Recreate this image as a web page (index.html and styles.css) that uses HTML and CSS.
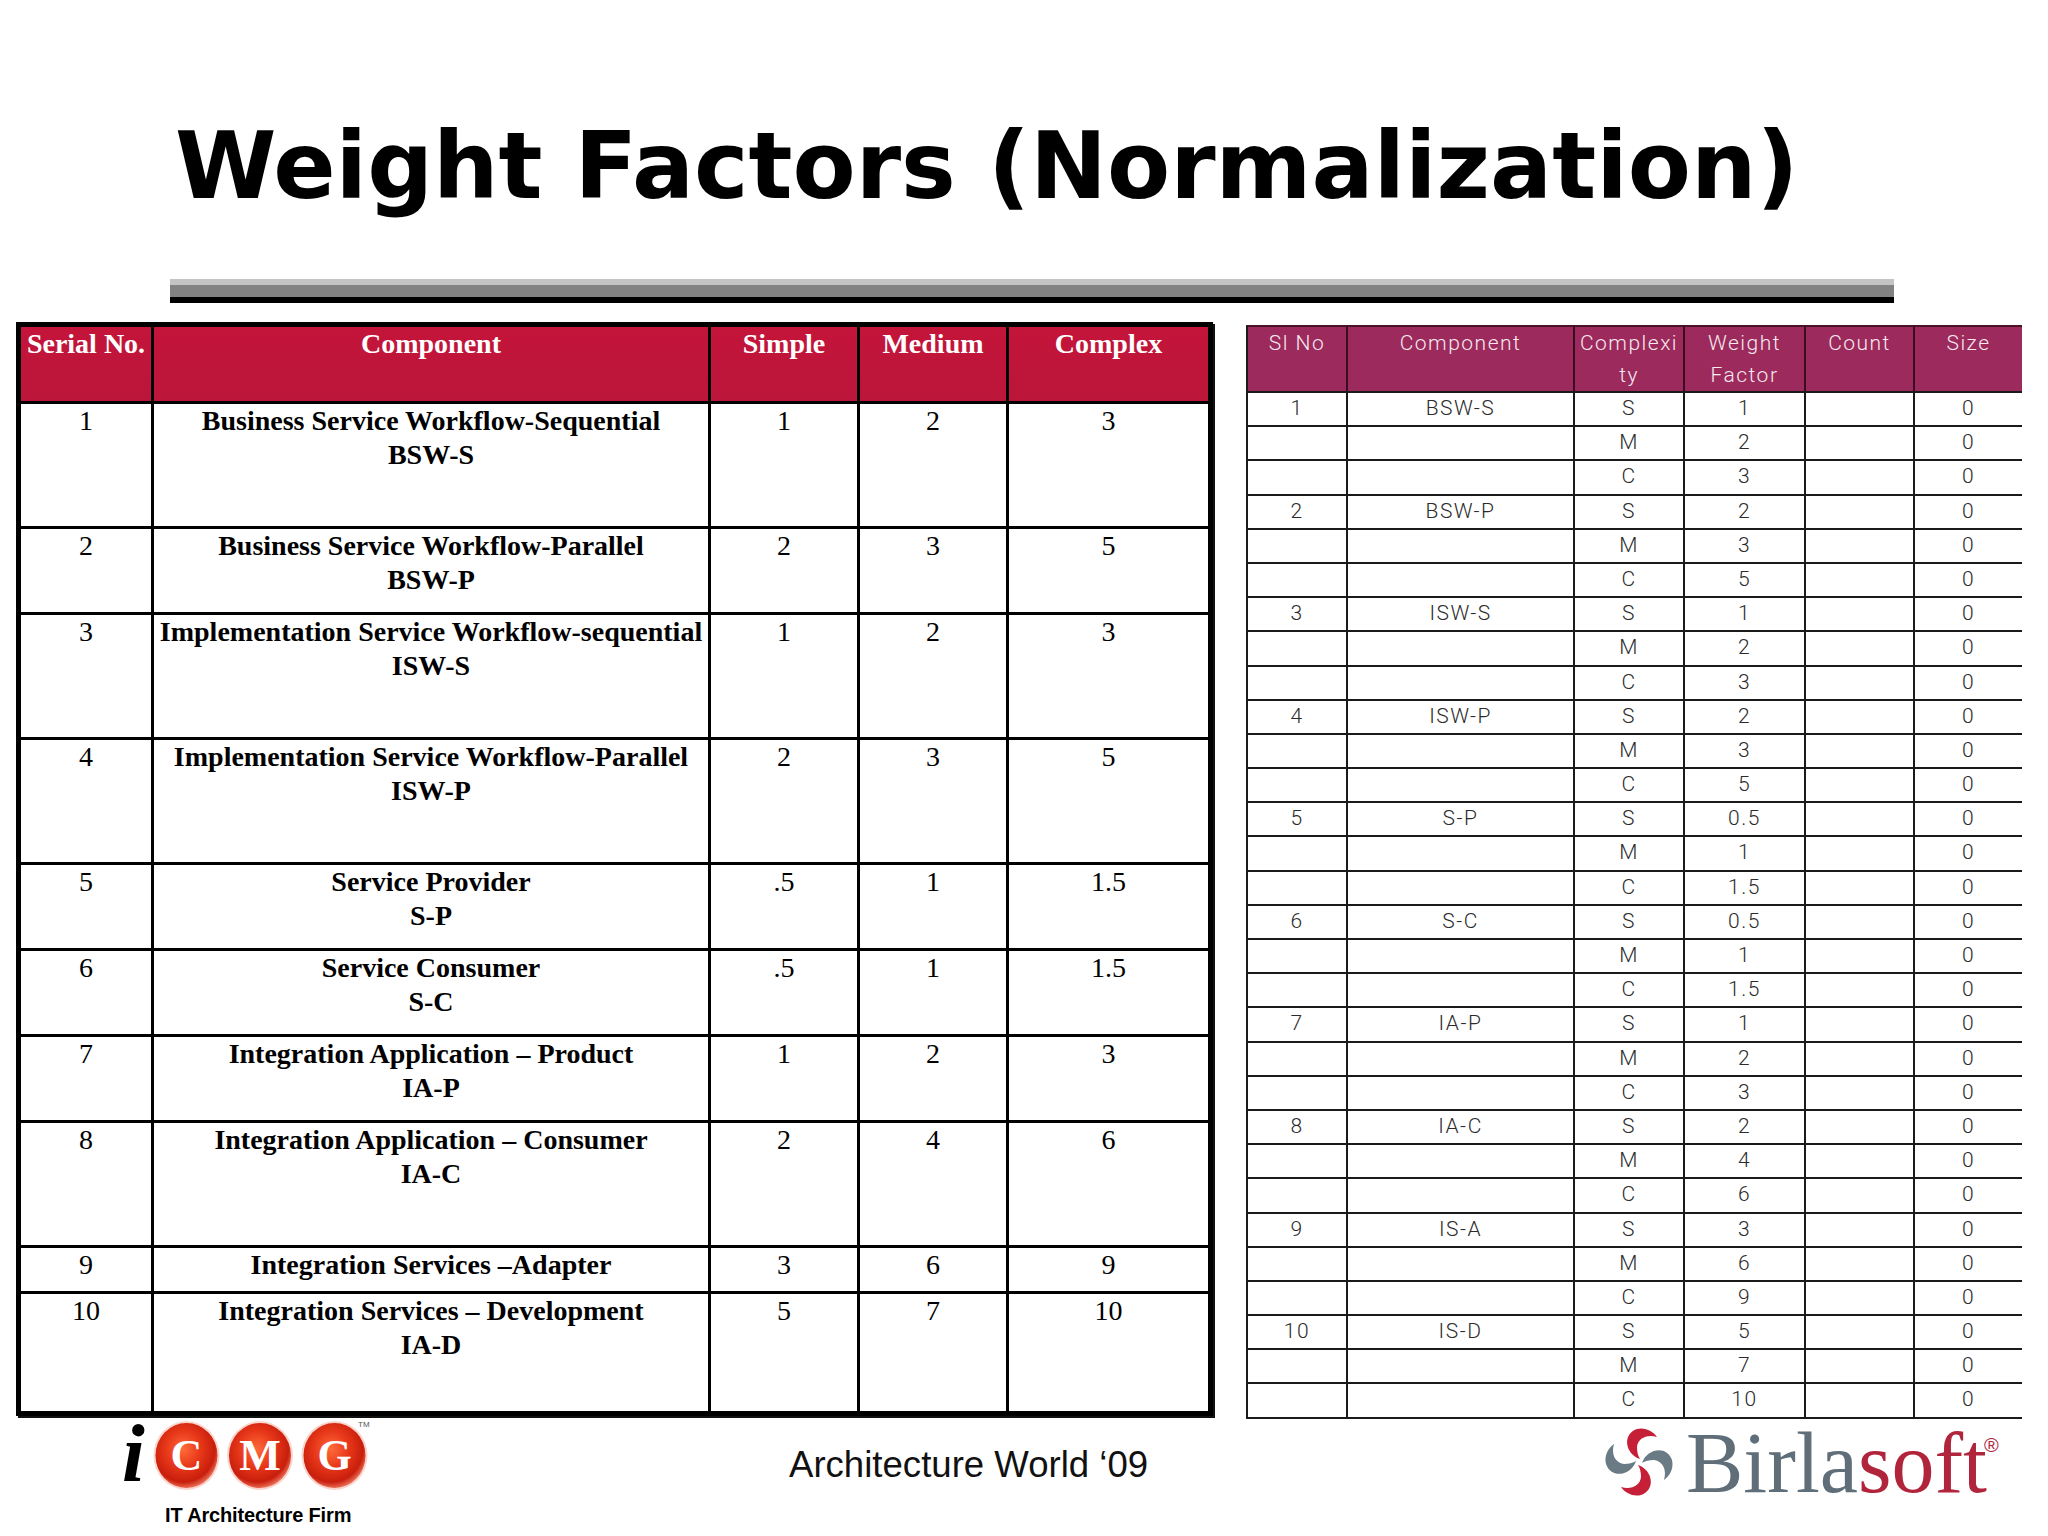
FILE: index.html
```html
<!DOCTYPE html>
<html lang="en">
<head>
<meta charset="utf-8">
<title>Weight Factors (Normalization)</title>
<link rel="stylesheet" href="styles.css">
</head>
<body>
<div class="slide">
  <h1 class="title">Weight Factors (Normalization)</h1>
  <div class="rule">
    <div class="rule-light"></div>
    <div class="rule-mid"></div>
    <div class="rule-dark"></div>
  </div>

  <div class="main">
    <table class="wf">
      <colgroup>
        <col class="c-sn"><col class="c-comp"><col class="c-val"><col class="c-val"><col class="c-cx">
      </colgroup>
      <tr class="hd">
        <th>Serial No.</th><th>Component</th><th>Simple</th><th>Medium</th><th>Complex</th>
      </tr>
      <tr class="tall">
        <td class="num">1</td><td class="comp">Business Service Workflow-Sequential<br>BSW-S</td>
        <td class="num">1</td><td class="num">2</td><td class="num">3</td>
      </tr>
      <tr class="mid">
        <td class="num">2</td><td class="comp">Business Service Workflow-Parallel<br>BSW-P</td>
        <td class="num">2</td><td class="num">3</td><td class="num">5</td>
      </tr>
      <tr class="tall">
        <td class="num">3</td><td class="comp">Implementation Service Workflow-sequential<br>ISW-S</td>
        <td class="num">1</td><td class="num">2</td><td class="num">3</td>
      </tr>
      <tr class="tall">
        <td class="num">4</td><td class="comp">Implementation Service Workflow-Parallel<br>ISW-P</td>
        <td class="num">2</td><td class="num">3</td><td class="num">5</td>
      </tr>
      <tr class="mid">
        <td class="num">5</td><td class="comp">Service Provider<br>S-P</td>
        <td class="num">.5</td><td class="num">1</td><td class="num">1.5</td>
      </tr>
      <tr class="mid">
        <td class="num">6</td><td class="comp">Service Consumer<br>S-C</td>
        <td class="num">.5</td><td class="num">1</td><td class="num">1.5</td>
      </tr>
      <tr class="mid">
        <td class="num">7</td><td class="comp">Integration Application – Product<br>IA-P</td>
        <td class="num">1</td><td class="num">2</td><td class="num">3</td>
      </tr>
      <tr class="tall">
        <td class="num">8</td><td class="comp">Integration Application – Consumer<br>IA-C</td>
        <td class="num">2</td><td class="num">4</td><td class="num">6</td>
      </tr>
      <tr class="short">
        <td class="num">9</td><td class="comp">Integration Services –Adapter</td>
        <td class="num">3</td><td class="num">6</td><td class="num">9</td>
      </tr>
      <tr class="last">
        <td class="num">10</td><td class="comp">Integration Services – Development<br>IA-D</td>
        <td class="num">5</td><td class="num">7</td><td class="num">10</td>
      </tr>
    </table>

    <table class="calc">
      <colgroup>
        <col class="k-sl"><col class="k-comp"><col class="k-cx"><col class="k-wf"><col class="k-cnt"><col class="k-size">
      </colgroup>
      <tr class="hd">
        <th>Sl No</th><th>Component</th><th>Complexi<br>ty</th><th>Weight<br>Factor</th><th>Count</th><th>Size</th>
      </tr>
      <tr><td>1</td><td>BSW-S</td><td>S</td><td>1</td><td></td><td>0</td></tr>
      <tr><td></td><td></td><td>M</td><td>2</td><td></td><td>0</td></tr>
      <tr><td></td><td></td><td>C</td><td>3</td><td></td><td>0</td></tr>
      <tr><td>2</td><td>BSW-P</td><td>S</td><td>2</td><td></td><td>0</td></tr>
      <tr><td></td><td></td><td>M</td><td>3</td><td></td><td>0</td></tr>
      <tr><td></td><td></td><td>C</td><td>5</td><td></td><td>0</td></tr>
      <tr><td>3</td><td>ISW-S</td><td>S</td><td>1</td><td></td><td>0</td></tr>
      <tr><td></td><td></td><td>M</td><td>2</td><td></td><td>0</td></tr>
      <tr><td></td><td></td><td>C</td><td>3</td><td></td><td>0</td></tr>
      <tr><td>4</td><td>ISW-P</td><td>S</td><td>2</td><td></td><td>0</td></tr>
      <tr><td></td><td></td><td>M</td><td>3</td><td></td><td>0</td></tr>
      <tr><td></td><td></td><td>C</td><td>5</td><td></td><td>0</td></tr>
      <tr><td>5</td><td>S-P</td><td>S</td><td>0.5</td><td></td><td>0</td></tr>
      <tr><td></td><td></td><td>M</td><td>1</td><td></td><td>0</td></tr>
      <tr><td></td><td></td><td>C</td><td>1.5</td><td></td><td>0</td></tr>
      <tr><td>6</td><td>S-C</td><td>S</td><td>0.5</td><td></td><td>0</td></tr>
      <tr><td></td><td></td><td>M</td><td>1</td><td></td><td>0</td></tr>
      <tr><td></td><td></td><td>C</td><td>1.5</td><td></td><td>0</td></tr>
      <tr><td>7</td><td>IA-P</td><td>S</td><td>1</td><td></td><td>0</td></tr>
      <tr><td></td><td></td><td>M</td><td>2</td><td></td><td>0</td></tr>
      <tr><td></td><td></td><td>C</td><td>3</td><td></td><td>0</td></tr>
      <tr><td>8</td><td>IA-C</td><td>S</td><td>2</td><td></td><td>0</td></tr>
      <tr><td></td><td></td><td>M</td><td>4</td><td></td><td>0</td></tr>
      <tr><td></td><td></td><td>C</td><td>6</td><td></td><td>0</td></tr>
      <tr><td>9</td><td>IS-A</td><td>S</td><td>3</td><td></td><td>0</td></tr>
      <tr><td></td><td></td><td>M</td><td>6</td><td></td><td>0</td></tr>
      <tr><td></td><td></td><td>C</td><td>9</td><td></td><td>0</td></tr>
      <tr><td>10</td><td>IS-D</td><td>S</td><td>5</td><td></td><td>0</td></tr>
      <tr><td></td><td></td><td>M</td><td>7</td><td></td><td>0</td></tr>
      <tr><td></td><td></td><td>C</td><td>10</td><td></td><td>0</td></tr>
    </table>
  </div>

  <div class="footer">
    <div class="icmg">
      <div class="icmg-row">
        <span class="icmg-i">i</span>
        <svg class="icmg-mark" width="225" height="86" viewBox="0 0 225 86" xmlns="http://www.w3.org/2000/svg">
          <defs>
            <radialGradient id="ball" cx="45%" cy="40%" r="62%">
              <stop offset="0%" stop-color="#ff6a3a"/>
              <stop offset="45%" stop-color="#e8381a"/>
              <stop offset="82%" stop-color="#c81e0c"/>
              <stop offset="100%" stop-color="#f07a62"/>
            </radialGradient>
          </defs>
          <ellipse cx="34.5" cy="36.5" rx="33" ry="34.5" fill="#f6b3a4" opacity="0.55"/>
          <ellipse cx="108" cy="36.5" rx="33" ry="34.5" fill="#f6b3a4" opacity="0.55"/>
          <ellipse cx="182.5" cy="36.5" rx="33" ry="34.5" fill="#f6b3a4" opacity="0.55"/>
          <ellipse cx="34.5" cy="36.5" rx="31" ry="32.5" fill="url(#ball)"/>
          <ellipse cx="108" cy="36.5" rx="31" ry="32.5" fill="url(#ball)"/>
          <ellipse cx="182.5" cy="36.5" rx="31" ry="32.5" fill="url(#ball)"/>
          <text x="34.5" y="51" class="icmg-l">C</text>
          <text x="108" y="51" class="icmg-l">M</text>
          <text x="182.5" y="51" class="icmg-l">G</text>
          <text x="206" y="8" class="icmg-tm">TM</text>
        </svg>
      </div>
      <div class="icmg-cap">IT Architecture Firm</div>
    </div>
    <div class="event">Architecture World ‘09</div>
    <div class="birla">
      <svg class="swirl" width="72" height="76" viewBox="-36 -38 72 76" xmlns="http://www.w3.org/2000/svg">
        <path class="blade-red" d="M1,-3 C-14,-8 -17,-28 -2,-33 C6,-35 14,-31 18,-25 C8,-28 -1,-24 -2,-15 C-2,-10 -1,-6 1,-3 Z"/>
        <path class="blade-grey" transform="rotate(90)" d="M1,-3 C-14,-8 -17,-28 -2,-33 C6,-35 14,-31 18,-25 C8,-28 -1,-24 -2,-15 C-2,-10 -1,-6 1,-3 Z"/>
        <path class="blade-red" transform="rotate(180)" d="M1,-3 C-14,-8 -17,-28 -2,-33 C6,-35 14,-31 18,-25 C8,-28 -1,-24 -2,-15 C-2,-10 -1,-6 1,-3 Z"/>
        <path class="blade-grey" transform="rotate(270)" d="M1,-3 C-14,-8 -17,-28 -2,-33 C6,-35 14,-31 18,-25 C8,-28 -1,-24 -2,-15 C-2,-10 -1,-6 1,-3 Z"/>
      </svg>
      <div class="birla-word"><span class="birla-a">Birla</span><span class="birla-b">soft</span></div>
      <div class="birla-reg">®</div>
    </div>
  </div>
</div>
</body>
</html>
```

FILE: styles.css
```css
html, body {
  margin: 0;
  padding: 0;
  background: #ffffff;
}

.slide {
  width: 2048px;
  height: 1536px;
  overflow: hidden;
  background: #ffffff;
}

.title {
  margin: 0;
  padding: 121px 0 0 175px;
  font-family: "DejaVu Sans", Verdana, sans-serif;
  font-weight: bold;
  font-size: 92px;
  line-height: 92px;
  color: #000;
  white-space: nowrap;
}

.rule {
  margin: 66px 0 0 170px;
  width: 1724px;
}
.rule-light { height: 6px; background: #c4c4c4; }
.rule-mid { height: 12px; background: #828282; }
.rule-dark { height: 6px; background: #000; }

.main {
  display: flex;
  align-items: flex-start;
  gap: 33px;
  margin-top: 19px;
  padding-left: 16px;
}

/* Left table */
.wf {
  width: 1197px;
  table-layout: fixed;
  border-collapse: separate;
  border-spacing: 0;
  border: 5px solid #000;
  box-shadow: 2px 2px 0 #111;
  font-family: "Liberation Serif", "Times New Roman", serif;
  font-size: 28px;
  line-height: 34px;
  color: #000;
}
.wf .c-sn { width: 133px; }
.wf .c-comp { width: 557px; }
.wf .c-val { width: 149px; }
.wf .c-cx { width: 199px; }

.wf th,
.wf td {
  padding: 0;
  vertical-align: top;
  text-align: center;
  border-right: 3px solid #000;
  border-bottom: 3px solid #000;
  white-space: nowrap;
}
.wf th:last-child,
.wf td:last-child { border-right: none; }
.wf tr.last td { border-bottom: none; }

.wf th {
  background: linear-gradient(#c4143a, #bb163a);
  color: #fff;
  font-weight: bold;
}
.wf tr.hd { height: 77px; }
.wf tr.tall { height: 125px; }
.wf tr.mid { height: 86px; }
.wf tr.short { height: 46px; }
.wf tr.last { height: 117px; }
.wf td.num { font-weight: normal; }
.wf td.comp { font-weight: bold; }

/* Right table */
.calc {
  width: 776px;
  table-layout: fixed;
  border-collapse: separate;
  border-spacing: 0;
  margin-top: 3px;
  font-family: Roboto, "Liberation Sans", sans-serif;
  font-weight: 300;
  font-size: 21px;
  letter-spacing: 1.5px;
  color: #2b2b2b;
}
.calc .k-sl { width: 102px; }
.calc .k-comp { width: 227px; }
.calc .k-cx { width: 110px; }
.calc .k-wf { width: 121px; }
.calc .k-cnt { width: 109px; }
.calc .k-size { width: 107px; }

.calc th,
.calc td {
  padding: 0;
  text-align: center;
  vertical-align: top;
  border-right: 2px solid #1a1a1a;
  border-bottom: 2px solid #1a1a1a;
}
.calc th:first-child,
.calc td:first-child { border-left: 2px solid #1a1a1a; }
.calc th:last-child,
.calc td:last-child { border-right: none; }

.calc th {
  background: #9c2a5c;
  color: #f6e9ef;
  font-weight: 300;
  line-height: 32px;
  border-top: 2px solid #4a1428;
  border-right-color: #3a0e20;
}
.calc tr.hd { height: 64px; }
.calc tr { height: 34.2px; }
.calc td { line-height: 31px; }

/* Footer */
.footer {
  display: flex;
  align-items: flex-start;
}

.icmg {
  margin-left: 120px;
  width: 260px;
}
.icmg-row {
  display: flex;
  align-items: flex-start;
}
.icmg-i {
  display: block;
  width: 32px;
  margin-top: -6px;
  padding-left: 2px;
  box-sizing: border-box;
  font-family: "Liberation Serif", serif;
  font-style: italic;
  font-weight: bold;
  font-size: 82px;
  line-height: 82px;
  color: #000;
}
.icmg-mark { display: block; }
.icmg-l {
  font-family: "Liberation Serif", serif;
  font-weight: bold;
  font-size: 44px;
  fill: #fff;
  text-anchor: middle;
}
.icmg-tm {
  font-family: "Liberation Sans", sans-serif;
  font-size: 8px;
  fill: #555;
}
.icmg-cap {
  margin-left: 45px;
  font-family: "Liberation Sans", Arial, sans-serif;
  font-weight: bold;
  font-size: 20px;
  line-height: 20px;
  letter-spacing: -0.15px;
  color: #000;
  white-space: nowrap;
}

.event {
  margin-left: 409px;
  margin-top: 28px;
  width: 400px;
  font-family: "Liberation Sans", Arial, sans-serif;
  font-size: 36.6px;
  line-height: 36px;
  color: #111;
  white-space: nowrap;
}

.birla {
  margin-left: 414px;
  display: flex;
  align-items: flex-start;
}
.swirl {
  display: block;
  margin-top: 5px;
}
.blade-red { fill: #c61f38; }
.blade-grey { fill: #6b7b85; }
.birla-word {
  margin-left: 11px;
  margin-top: 1px;
  font-family: "Liberation Serif", "Times New Roman", serif;
  font-size: 86px;
  line-height: 86px;
  white-space: nowrap;
}
.birla-a { color: #5f6e78; }
.birla-b { color: #b0243c; }
.birla-reg {
  margin-left: -3px;
  margin-top: 16px;
  font-family: "Liberation Sans", sans-serif;
  font-size: 20px;
  line-height: 20px;
  color: #b0243c;
}
```
